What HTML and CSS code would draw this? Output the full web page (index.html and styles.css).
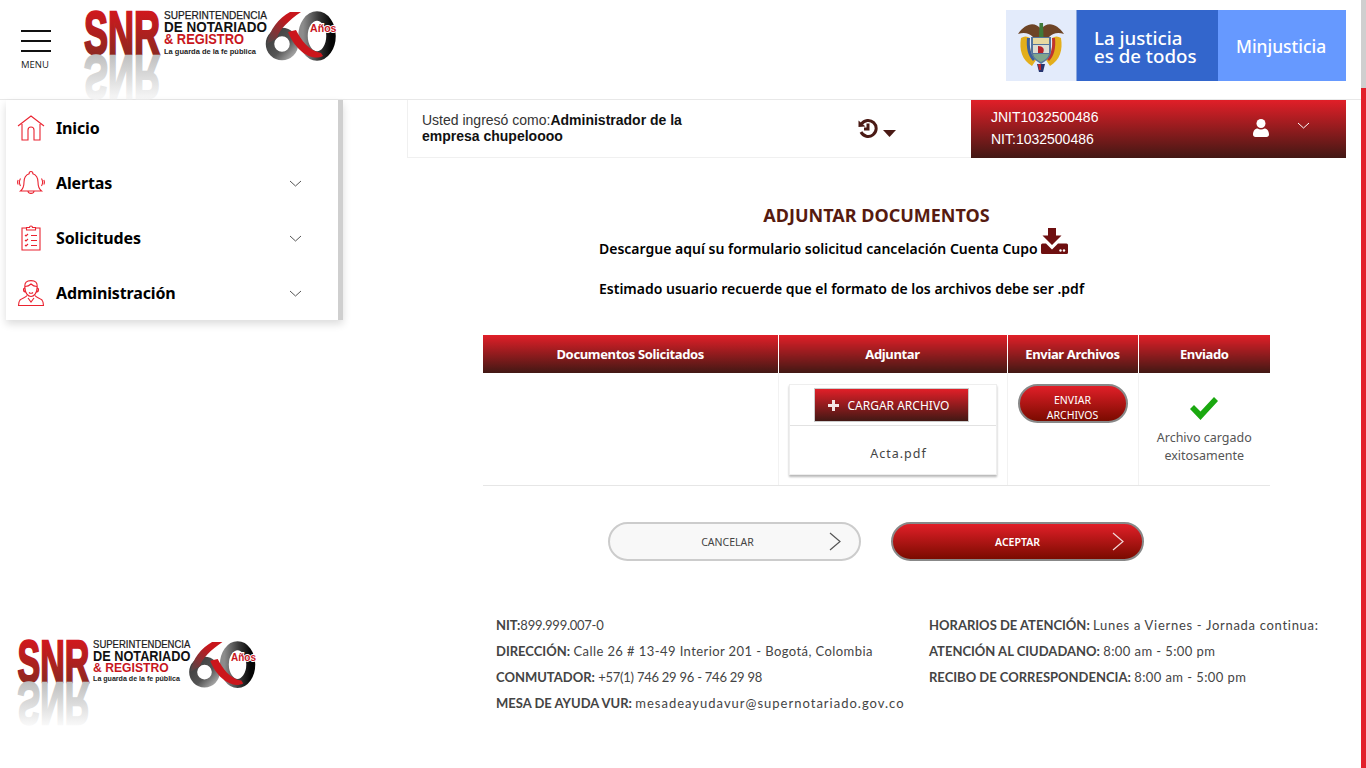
FILE: index.html
```html
<!DOCTYPE html>
<html lang="es">
<head>
<meta charset="utf-8">
<title>Adjuntar documentos</title>
<link rel="stylesheet" href="styles.css">
</head>
<body>
<div class="page">
  <header class="header">
    <button class="burger"><span class="bar"></span><span class="bar"></span><span class="bar"></span><span class="burger-label">MENU</span></button>
    <svg class="logo" viewBox="0 0 254 90">
      <defs>
        <linearGradient id="snrA" x1="0" y1="0" x2="0" y2="1"><stop offset="0" stop-color="#e3141c"/><stop offset="1" stop-color="#7c2c22"/></linearGradient>
        <linearGradient id="snrB" x1="0" y1="0" x2="0" y2="1"><stop offset=".1" stop-color="#fff"/><stop offset=".85" stop-color="#bdbdbd"/></linearGradient>
        <linearGradient id="ringA" x1="0" y1="0" x2="1" y2="0"><stop offset="0" stop-color="#8c8c8c"/><stop offset=".55" stop-color="#3a3a3a"/><stop offset="1" stop-color="#050505"/></linearGradient>
        <linearGradient id="ringB" x1="0" y1="0" x2="1" y2="1"><stop offset="0" stop-color="#3c3c3c"/><stop offset=".6" stop-color="#555"/><stop offset="1" stop-color="#aaa"/></linearGradient>
        <linearGradient id="stemA" x1="1" y1="0" x2="0" y2="1"><stop offset=".3" stop-color="#c8161c"/><stop offset="1" stop-color="#4a4a4a"/></linearGradient>
      </defs>
      <text class="snr" x="1" y="44" textLength="76" lengthAdjust="spacingAndGlyphs" fill="url(#snrA)" stroke="url(#snrA)">SNR</text>
      <text class="snr" x="1" y="-46" textLength="76" lengthAdjust="spacingAndGlyphs" fill="url(#snrB)" stroke="url(#snrB)" transform="scale(1,-1)">SNR</text>
      <text class="l1" x="81" y="8.500" textLength="103" lengthAdjust="spacingAndGlyphs">SUPERINTENDENCIA</text>
      <text class="l2" x="81" y="22" textLength="103" lengthAdjust="spacingAndGlyphs">DE NOTARIADO</text>
      <text class="l3" x="81" y="34" textLength="80" lengthAdjust="spacingAndGlyphs">&amp; REGISTRO</text>
      <text class="l4" x="81" y="43.500" textLength="92" lengthAdjust="spacingAndGlyphs">La guarda de la fe pública</text>
      <ellipse cx="234" cy="26" rx="14" ry="20" fill="none" stroke="url(#ringA)" stroke-width="9.500"/>
      <circle cx="199" cy="34" r="12" fill="none" stroke="url(#ringB)" stroke-width="8.500"/>
      <path d="M207 2 L218 2 C206 10 196 20 194 28 L184 34 C186 20 196 8 207 2Z" fill="url(#stemA)"/>
      <path d="M205 22 L213 20 C218 30 226 41 238 43 L240 46 C228 52 212 40 205 22Z" fill="#cb161c"/>
      <text class="anos" x="227" y="22" textLength="26.500" lengthAdjust="spacingAndGlyphs">Años</text>
    </svg>
    <div class="gov">
      <div class="gov-shield">
        <svg class="shield" viewBox="0 0 46 52">
          <path d="M23 9 C17 1 7 3 0 14 C6 12 11 13 15 17 L31 17 C35 13 40 12 46 14 C39 3 29 1 23 9Z" fill="#6d4426"/>
          <path d="M21.500 3 L25 3 L25.500 17 L21 17Z" fill="#3f7a3a"/>
          <path d="M3 18 C1 30 4 40 14 46 L18 40 C13 36 11 28 12 18 C9 16 6 16 3 18Z" fill="#e3ae1c"/>
          <path d="M43 18 C45 30 42 40 32 46 L28 40 C33 36 35 28 34 18 C37 16 40 16 43 18Z" fill="#e3ae1c"/>
          <path d="M9 18 C8 28 10 36 15 41 L17 39 C13 35 11 27 12 18Z" fill="#3c5e9c"/>
          <path d="M37 18 C38 28 36 36 31 41 L29 39 C33 35 35 27 34 18Z" fill="#c0342e"/>
          <path d="M13 17 H33 V31 C33 37 28 41 23 44 C18 41 13 37 13 31Z" fill="#54749c"/>
          <rect x="15" y="18" width="16" height="6" fill="#e7d9a0"/>
          <path d="M15 25 H31 V33 H15Z" fill="#dcdcd0"/>
          <path d="M20 26 C25 26 27 29 25 33 L20 33Z" fill="#b5232a"/>
          <path d="M15 34 H31 C30 38 27 40 23 42 C19 40 16 38 15 34Z" fill="#7fa58d"/>
          <path d="M19 44 H27 L25 52 H21Z" fill="#27356f"/>
          <path d="M20 44 H23 V50 H21Z" fill="#c0242a"/>
        </svg>
      </div>
      <div class="gov-motto">La justicia<br>es de todos</div>
      <div class="gov-name">Minjusticia</div>
    </div>
  </header>

  <div class="main">
    <div class="side-col">
      <nav class="sidebar">
        <a class="nav-item">
          <svg class="nav-icon" viewBox="0 0 28 26"><path d="M1 11 L14 1 L27 11M5 9V25H11V15A3 3 0 0 1 17 15V25H23V9"/></svg>
          <span class="nav-label">Inicio</span>
        </a>
        <a class="nav-item">
          <svg class="nav-icon" viewBox="0 0 28 26"><path d="M14 1.500a1.800 1.800 0 0 1 1.800 2.200C19.500 5 21 8 21 12c0 4 1 7 3.500 9H3.500C6 19 7 16 7 12c0-4 1.500-7 5.200-8.300A1.800 1.800 0 0 1 14 1.500ZM11 21.500c.5 2.500 5.500 2.500 6 0M3.500 8.500c-1.500 2.500-1.500 5 0 7.500M1.200 10c-.8 1.500-.8 3 0 4.500M24.500 8.500c1.500 2.500 1.500 5 0 7.500M26.800 10c.8 1.500.8 3 0 4.500"/></svg>
          <span class="nav-label">Alertas</span>
          <svg class="nav-chev" viewBox="0 0 13 7"><path d="M1 1 L6.500 6 L12 1"/></svg>
        </a>
        <a class="nav-item">
          <svg class="nav-icon" viewBox="0 0 28 26"><path d="M9.500 3H5V25H23V3H18.500M9.500 5V2.500H12.500C12.500 .5 15.500 .5 15.500 2.500H18.500V5ZM8 10l1 1 2-2M8 15l1 1 2-2M8 20l1 1 2-2M14 10.500H20M14 15.500H20M14 20.500H20"/></svg>
          <span class="nav-label">Solicitudes</span>
          <svg class="nav-chev" viewBox="0 0 13 7"><path d="M1 1 L6.500 6 L12 1"/></svg>
        </a>
        <a class="nav-item">
          <svg class="nav-icon" viewBox="0 0 28 26"><path d="M8 8C7 2 10 .6 14 .6S21 2 20 8C20 13 17 16.500 14 16.500S8 13 8 8ZM8 6.500C11 6.500 13 5 14 4C15 5 17 6.500 20 6.500M6.500 9.500C6.500 8 8 8 8 9V12C7 12 6.500 11 6.500 9.500ZM21.500 9.500C21.500 8 20 8 20 9V12C21 12 21.500 11 21.500 9.500ZM10 15.500C9 17.500 5 18 3 20C1.800 21.500 1.500 23.500 1.500 25.500H26.500C26.500 23.500 26.200 21.500 25 20C23 18 19 17.500 18 15.500M11 18L14 22L17 18M12 12.500C13 13.500 15 13.500 16 12.500"/></svg>
          <span class="nav-label">Administración</span>
          <svg class="nav-chev" viewBox="0 0 13 7"><path d="M1 1 L6.500 6 L12 1"/></svg>
        </a>
      </nav>
    </div>

    <main class="content">
      <div class="topbar">
        <div class="who"><span>Usted ingresó como:</span><b>Administrador de la</b><br><b>empresa chupeloooo</b></div>
        <div class="history">
          <svg class="hist-icon" viewBox="0 0 20 20"><path class="hist-arc" d="M3.500 6A8 8 0 1 1 3 14"/><path class="hist-fill" d="M0.500 2.500 L7.500 8.500 L0.500 9Z"/><path class="hist-arc" d="M10 5.500V11H6"/></svg>
          <svg class="caret" viewBox="0 0 13 7"><path d="M0 0H13L6.500 7Z"/></svg>
        </div>
        <div class="account">
          <div class="account-text">JNIT1032500486<br>NIT:1032500486</div>
          <svg class="user-icon" viewBox="0 0 16 18"><circle cx="8" cy="4.500" r="4.500"/><path d="M0 15.500C0 11.500 2.500 9.500 4.500 9.500C6.500 10.800 9.500 10.800 11.500 9.500C13.500 9.500 16 11.500 16 15.500C16 17 15 18 13.500 18H2.500C1 18 0 17 0 15.500Z"/></svg>
          <svg class="acc-chev" viewBox="0 0 13 7"><path d="M1 1 L6.500 6 L12 1"/></svg>
        </div>
      </div>

      <h1 class="title">ADJUNTAR DOCUMENTOS</h1>
      <div class="notes">
        <p class="note note-dl">Descargue aquí su formulario solicitud cancelación Cuenta Cupo
          <svg class="dl-icon" viewBox="0 0 28 27"><path d="M8 0H16V7.500H21.500L12 17L2.500 7.500H8Z"/><path d="M2.500 15.500H6L12 21.500L18 15.500H26.500Q28 15.500 28 17V24.500Q28 26 26.500 26H2.500Q1 26 1 24.500V17Q1 15.500 2.500 15.500Z"/><circle class="dl-dot" cx="20.500" cy="22.500" r="1.200"/><circle class="dl-dot" cx="24" cy="22.500" r="1.200"/></svg>
        </p>
        <p class="note note-fmt">Estimado usuario recuerde que el formato de los archivos debe ser .pdf</p>
      </div>

      <table class="docs">
        <thead>
          <tr><th class="c1">Documentos Solicitados</th><th class="c2">Adjuntar</th><th class="c3">Enviar Archivos</th><th class="c4">Enviado</th></tr>
        </thead>
        <tbody>
          <tr>
            <td></td>
            <td>
              <div class="card">
                <div class="card-top">
                  <button class="upload"><svg class="plus" viewBox="0 0 11 11"><path d="M4 0H7V4H11V7H7V11H4V7H0V4H4Z"/></svg>CARGAR ARCHIVO</button>
                </div>
                <div class="file">Acta.pdf</div>
              </div>
            </td>
            <td><button class="send">ENVIAR ARCHIVOS</button></td>
            <td class="sent">
              <svg class="check" viewBox="0 0 28 23"><path d="M0 12L4 8L10.500 14.500L24 0L28 4L10.500 23Z"/></svg>
              <div class="sent-text">Archivo cargado exitosamente</div>
            </td>
          </tr>
        </tbody>
      </table>

      <div class="actions">
        <button class="pill pill-light"><span class="pill-label">CANCELAR</span><svg class="pill-chev" viewBox="0 0 12 19"><path d="M1 1L11 9.500L1 18"/></svg></button>
        <button class="pill pill-red"><span class="pill-label">ACEPTAR</span><svg class="pill-chev" viewBox="0 0 12 19"><path d="M1 1L11 9.500L1 18"/></svg></button>
      </div>
    </main>
  </div>

  <footer class="footer">
    <svg class="logo logo-foot" viewBox="0 0 254 90">
      <defs>
        <linearGradient id="snrA2" x1="0" y1="0" x2="0" y2="1"><stop offset="0" stop-color="#e3141c"/><stop offset="1" stop-color="#7c2c22"/></linearGradient>
        <linearGradient id="snrB2" x1="0" y1="0" x2="0" y2="1"><stop offset=".1" stop-color="#fff"/><stop offset=".85" stop-color="#bdbdbd"/></linearGradient>
        <linearGradient id="ringA2" x1="0" y1="0" x2="1" y2="0"><stop offset="0" stop-color="#8c8c8c"/><stop offset=".55" stop-color="#3a3a3a"/><stop offset="1" stop-color="#050505"/></linearGradient>
        <linearGradient id="ringB2" x1="0" y1="0" x2="1" y2="1"><stop offset="0" stop-color="#3c3c3c"/><stop offset=".6" stop-color="#555"/><stop offset="1" stop-color="#aaa"/></linearGradient>
        <linearGradient id="stemA2" x1="1" y1="0" x2="0" y2="1"><stop offset=".3" stop-color="#c8161c"/><stop offset="1" stop-color="#4a4a4a"/></linearGradient>
      </defs>
      <text class="snr" x="1" y="44" textLength="76" lengthAdjust="spacingAndGlyphs" fill="url(#snrA2)" stroke="url(#snrA2)">SNR</text>
      <text class="snr" x="1" y="-46" textLength="76" lengthAdjust="spacingAndGlyphs" fill="url(#snrB2)" stroke="url(#snrB2)" transform="scale(1,-1)">SNR</text>
      <text class="l1" x="81" y="8.500" textLength="103" lengthAdjust="spacingAndGlyphs">SUPERINTENDENCIA</text>
      <text class="l2" x="81" y="22" textLength="103" lengthAdjust="spacingAndGlyphs">DE NOTARIADO</text>
      <text class="l3" x="81" y="34" textLength="80" lengthAdjust="spacingAndGlyphs">&amp; REGISTRO</text>
      <text class="l4" x="81" y="43.500" textLength="92" lengthAdjust="spacingAndGlyphs">La guarda de la fe pública</text>
      <ellipse cx="234" cy="26" rx="14" ry="20" fill="none" stroke="url(#ringA2)" stroke-width="9.500"/>
      <circle cx="199" cy="34" r="12" fill="none" stroke="url(#ringB2)" stroke-width="8.500"/>
      <path d="M207 2 L218 2 C206 10 196 20 194 28 L184 34 C186 20 196 8 207 2Z" fill="url(#stemA2)"/>
      <path d="M205 22 L213 20 C218 30 226 41 238 43 L240 46 C228 52 212 40 205 22Z" fill="#cb161c"/>
      <text class="anos" x="227" y="22" textLength="26.500" lengthAdjust="spacingAndGlyphs">Años</text>
    </svg>
    <div class="foot-col foot-a">
      <p><b>NIT:</b><span class="num">899.999.007-0</span></p>
      <p><b>DIRECCIÓN:</b> <span class="val">Calle 26 # 13-49 Interior 201 - Bogotá, Colombia</span></p>
      <p><b>CONMUTADOR:</b> <span class="num">+57(1) 746 29 96 - 746 29 98</span></p>
      <p><b>MESA DE AYUDA VUR:</b> <span class="mail">mesadeayudavur@supernotariado.gov.co</span></p>
    </div>
    <div class="foot-col foot-b">
      <p><b>HORARIOS DE ATENCIÓN:</b> <span class="val-wide">Lunes a Viernes - Jornada continua:</span></p>
      <p><b>ATENCIÓN AL CIUDADANO:</b> <span class="val">8:00 am - 5:00 pm</span></p>
      <p><b>RECIBO DE CORRESPONDENCIA:</b> <span class="val">8:00 am - 5:00 pm</span></p>
    </div>
  </footer>
</div>
<div class="scrollbar"><div class="scroll-track"></div><div class="scroll-thumb"></div></div>
</body>
</html>
```
FILE: styles.css
```css
* { box-sizing: border-box; }
html, body { height: 100%; }
body {
  margin: 0;
  display: flex;
  overflow: hidden;
  background: #fff;
  color: #000;
  font-family: "Noto Sans", sans-serif;
}
.page { flex: 1; min-width: 0; }
.scrollbar { width: 5px; display: flex; flex-direction: column; }
.scroll-track { height: 88px; background: #cfcfcf; }
.scroll-thumb { flex: 1; background: #e2202b; }

button { font-family: inherit; cursor: pointer; }

/* header */
.header {
  height: 100px;
  display: flex;
  align-items: flex-start;
  padding-right: 15px;
  border-bottom: 1px solid #e8e8e8;
}
.burger {
  width: 30px;
  margin: 30px 0 0 21px;
  padding: 0;
  border: 0;
  background: none;
  display: flex;
  flex-direction: column;
  gap: 8px;
  text-align: left;
}
.bar { height: 2px; width: 30px; background: #111; display: block; }
.burger-label { font: 9.500px/10px "Open Sans", sans-serif; color: #222; }
.logo { display: block; width: 254px; height: 90px; margin: 10px 0 0 32px; overflow: visible; }
.snr { font: 700 62px "Liberation Sans", sans-serif; stroke-width: 2.400; }
.l1 { font: 400 11px "Liberation Sans", sans-serif; fill: #1a1a1a; stroke: #1a1a1a; stroke-width: .25; }
.l2 { font: 700 15px "Liberation Sans", sans-serif; fill: #111; }
.l3 { font: 700 14.500px "Liberation Sans", sans-serif; fill: #c8161d; }
.l4 { font: 700 8px "Liberation Sans", sans-serif; fill: #222; }
.anos { font: 700 11px "Liberation Sans", sans-serif; fill: #c8161d; stroke: #fff; stroke-width: 2; paint-order: stroke; }

.gov {
  margin: 10px 0 0 auto;
  width: 340px;
  height: 71px;
  display: flex;
  color: #fff;
}
.gov-shield { width: 71px; background: #e3ebfb; display: flex; justify-content: center; align-items: center; border-right: 1px solid #8aa6dd; }
.shield { width: 46px; height: 52px; display: block; }
.gov-motto { width: 141px; background: #3366cc; padding: 19px 0 0 17px; font-size: 18.700px; font-weight: 500; line-height: 18px; }
.gov-name { flex: 1; background: #6699ff; padding-right: 2px; font-size: 17.400px; font-weight: 500; display: flex; align-items: center; justify-content: center; }

/* layout */
.main { display: flex; padding-right: 15px; height: 484px; }
.side-col { width: 407px; padding-left: 6px; }
.sidebar {
  width: 337px;
  height: 220px;
  background: #fff;
  border-right: 5px solid #cfcfcf;
  box-shadow: 0 4px 8px rgba(0,0,0,.14);
}
.nav-item { height: 55px; display: flex; align-items: center; padding-left: 11px; color: #000; }
.nav-icon { width: 28px; height: 26px; fill: none; stroke: #ea2330; stroke-width: 1.100; display: block; }
.nav-label { font-size: 16px; font-weight: 700; letter-spacing: -.15px; margin-left: 11px; flex: 1; }
.nav-chev { width: 13px; height: 7px; margin: 2px 36px 0 0; fill: none; stroke: #555; stroke-width: 1; }

.content { flex: 1; min-width: 0; display: flex; flex-direction: column; }
.topbar { height: 58px; display: flex; border: 1px solid #f0f0f0; border-top: 0; border-right: 0; }
.who {
  width: 451px;
  padding: 12px 0 0 14px;
  font: 14px/16px "Liberation Sans", sans-serif;
  color: #333;
}
.who b { color: #111; }
.history { flex: 1; display: flex; align-items: flex-start; padding-top: 18px; }
.hist-icon { width: 20px; height: 20px; margin-left: -1px; }
.hist-arc { fill: none; stroke: #4a1a15; stroke-width: 3; }
.hist-fill { fill: #4a1a15; }
.caret { width: 13px; height: 7px; fill: #4a1a15; margin: 12px 0 0 5px; }
.account {
  width: 375px;
  height: 58px;
  background: linear-gradient(#e11f28, #421814);
  display: flex;
  align-items: flex-start;
  color: #fff;
  padding-left: 20px;
  font: 14px/22px "Liberation Sans", sans-serif;
}
.account-text { width: 262px; padding-top: 6px; }
.user-icon { width: 16px; height: 18px; fill: #fff; margin-top: 19px; }
.acc-chev { width: 13px; height: 7px; margin: 22px 0 0 28px; fill: none; stroke: #fff; stroke-width: 1; }

.title { margin: 46px 0 0; font-size: 18px; line-height: 22px; font-weight: 700; color: #561b10; text-align: center; }
.notes { padding-left: 192px; }
.note { margin: 0; font-size: 14px; font-weight: 600; color: #000; }
.note-dl { display: flex; align-items: flex-end; height: 28px; margin-top: 1px; line-height: 12px; gap: 1px; white-space: nowrap; }
.dl-icon { width: 28px; height: 27px; fill: #6e0f10; margin-left: 1px; }
.dl-dot { fill: #fff; }
.note-fmt { margin-top: 22px; line-height: 24px; }

.docs { width: 787px; margin: 34px 0 0 76px; border-collapse: collapse; table-layout: fixed; }
.docs th {
  height: 38px;
  padding: 0;
  background: linear-gradient(#e11f28, #421814);
  color: #fff;
  font-size: 13px;
  font-weight: 700;
  letter-spacing: -.35px;
  border-left: 1px solid #fff;
  text-align: center;
}
.docs th:first-child { border-left: 0; }
.c1 { width: 295px; }
.c2 { width: 229px; }
.c3 { width: 131px; }
.docs td { height: 112px; vertical-align: top; padding: 0; border-left: 1px solid #f2f2f2; border-bottom: 1px solid #e6e6e6; }
.docs td:first-child { border-left: 0; }

.card {
  width: 208px;
  height: 91px;
  margin: 11px 0 0 10px;
  background: #fff;
  border: 1px solid #eee;
  box-shadow: 0 2px 2px rgba(0,0,0,.28);
  display: flex;
  flex-direction: column;
}
.card-top { height: 41px; padding: 3px 0 0 24px; border-bottom: 1px solid #e2e2e2; display: flex; }
.upload {
  width: 155px;
  height: 34px;
  border: 1px solid #ccc;
  padding: 0 0 0 13px;
  background: linear-gradient(#e11f28, #421814);
  color: #fff;
  font-size: 12px;
  display: flex;
  align-items: center;
  gap: 9px;
}
.plus { width: 11px; height: 11px; fill: #f4e6e6; }
.file { flex: 1; display: flex; align-items: center; justify-content: center; padding: 7px 0 0 12px; font-size: 12.500px; letter-spacing: 1px; color: #444; }

.send {
  display: block;
  width: 110px;
  height: 39px;
  margin: 11px 0 0 10px;
  padding: 7px 20px 0;
  border: 2px solid #888;
  border-radius: 20px;
  background: linear-gradient(#e11f28, #7a0b00);
  color: #fff;
  font-size: 10.500px;
  line-height: 15px;
  text-align: center;
  overflow: hidden;
}

.sent { text-align: center; }
.check { display: block; width: 28px; height: 23px; fill: #1aa80f; margin: 24px auto 0; }
.sent-text { margin: 9px 10px 0; font-size: 12.500px; line-height: 18px; color: #555; }

.actions { display: flex; gap: 30px; margin: 36px 0 0 201px; }
.pill {
  width: 253px;
  height: 39px;
  padding: 0;
  border-radius: 20px;
  display: flex;
  align-items: center;
  font-size: 10.500px;
}
.pill-label { flex: 1; padding: 1px 0 0 16px; text-align: center; }
.pill-chev { width: 12px; height: 19px; margin-right: 18px; fill: none; stroke-width: 1.200; }
.pill-light { border: 2px solid #ccc; background: #f8f8f8; color: #444; }
.pill-light .pill-chev { stroke: #555; }
.pill-red { border: 2px solid #888; background: linear-gradient(#e11f28, #7a0b00); color: #fff; font-weight: 600; }
.pill-red .pill-label { padding-left: 30px; }
.pill-red .pill-chev { stroke: #f3d9d9; }

/* footer */
.footer { display: flex; align-items: flex-start; padding-top: 28px; }
.logo-foot { width: 241px; height: 85px; margin: 28px 0 0 16px; flex: none; }
.foot-col { font-family: "Lato", sans-serif; font-size: 13px; color: #444; }
.foot-col b { letter-spacing: 0; }
.foot-col p { margin: 0; height: 26px; line-height: 26px; white-space: nowrap; }
.val { letter-spacing: .42px; }
.val-wide { letter-spacing: .7px; }
.num { letter-spacing: -.25px; }
.mail { letter-spacing: 1px; }
.foot-a { width: 433px; margin-left: 239px; }
.foot-b { flex: 1; }
```
